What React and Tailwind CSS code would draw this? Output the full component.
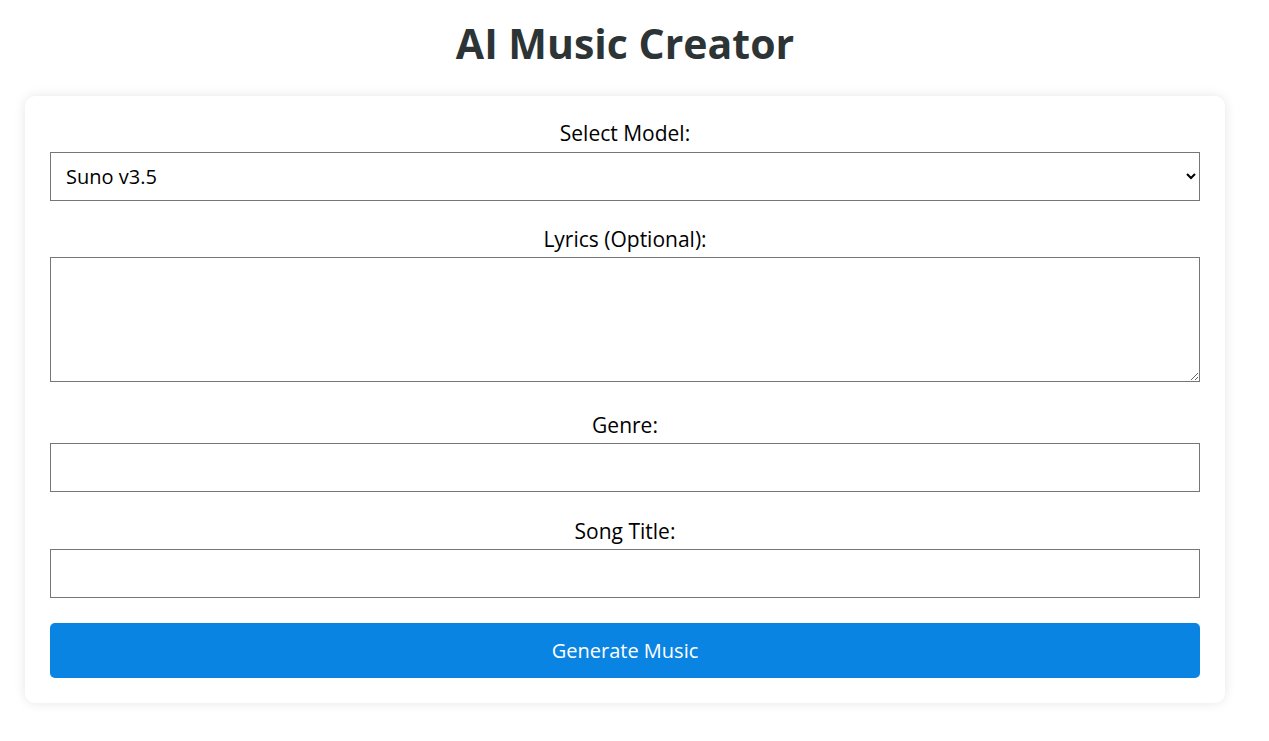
export default function App() {
  const font = { fontFamily: '"Open Sans", "Noto Sans", sans-serif' }
  return (
    <div className="min-h-screen bg-white" style={font}>
      <div className="w-[1250px] pt-[17px]">
        <h1 className="text-center text-[41px] font-bold leading-[52px] text-[#2d3436]">AI Music Creator</h1>

        <div className="mx-[25px] mt-[27px] rounded-[10px] bg-white px-[25px] pb-[25px] shadow-[0_0_12px_rgba(0,0,0,0.1)]">
          <form className="flex flex-col pt-[25px]" onSubmit={e => e.preventDefault()}>
            <label className="mb-[7px] text-center text-[21px] leading-[24px] text-black">Select Model:</label>
            <select className="mb-[26px] h-[49px] w-full rounded-none border border-[#767676] bg-white pl-[11px] pr-[8px] text-[20px] text-black">
              <option>Suno v3.5</option>
              <option>Suno v3</option>
            </select>

            <label className="mb-[6px] text-center text-[21px] leading-[24px] text-black">Lyrics (Optional):</label>
            <textarea className="mb-[31px] block h-[125px] w-full resize-y rounded-none border border-[#767676] bg-white p-[8px] text-[18px]" />

            <label className="mb-[6px] text-center text-[21px] leading-[24px] text-black">Genre:</label>
            <input type="text" className="mb-[27px] h-[49px] w-full rounded-none border border-[#767676] bg-white px-[15px] text-[18px]" />

            <label className="mb-[6px] text-center text-[21px] leading-[24px] text-black">Song Title:</label>
            <input type="text" className="mb-[25px] h-[49px] w-full rounded-none border border-[#767676] bg-white px-[15px] text-[18px]" />

            <button type="submit" className="h-[55px] w-full rounded-[5px] bg-[#0984e3] text-[20px] text-white">
              Generate Music
            </button>
          </form>
        </div>
      </div>
    </div>
  )
}
